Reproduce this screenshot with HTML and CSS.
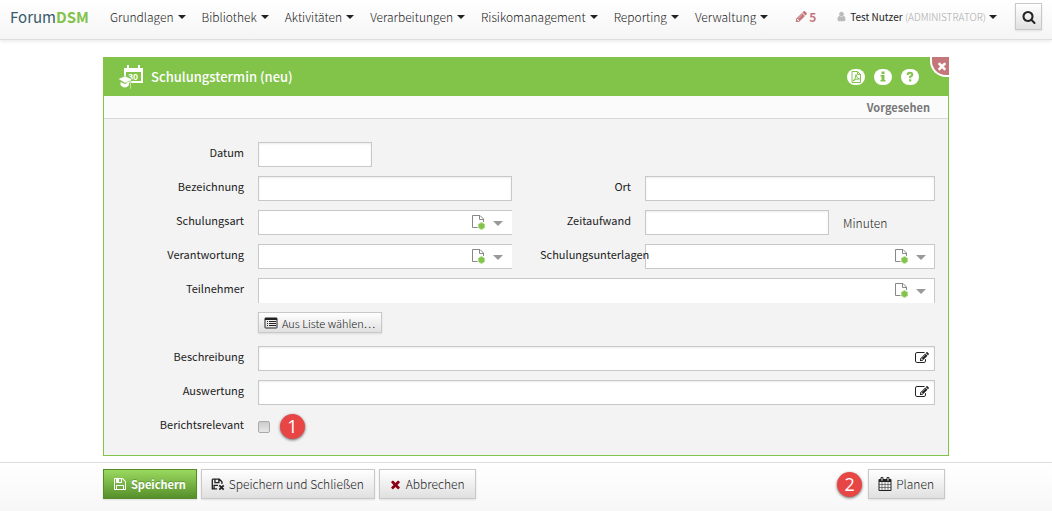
FILE: index.html
```html
<!DOCTYPE html>
<html lang="de">
<head>
	<meta charset="UTF-8">
	<meta name="viewport" content="width=device-width, initial-scale=1.0">
	<title>ForumDSM</title>
	<link rel="stylesheet" href="styles.css">
</head>
<body>
	<!-- shared icons -->
	<svg class="sprite" aria-hidden="true">
		<symbol id="i-times" viewBox="0 0 1792 1792"><path d="M1490 1322q0 40-28 68l-136 136q-28 28-68 28t-68-28l-294-294-294 294q-28 28-68 28t-68-28l-136-136q-28-28-28-68t28-68l294-294-294-294q-28-28-28-68t28-68l136-136q28-28 68-28t68 28l294 294 294-294q28-28 68-28t68 28l136 136q28 28 28 68t-28 68l-294 294 294 294q28 28 28 68z"/></symbol>
		<symbol id="i-save" viewBox="0 0 1792 1792"><path d="M512 1536h768v-384h-768v384zm896 0h128v-896q0-14-10-38.5t-20-34.5l-281-281q-10-10-34-20t-39-10v416q0 40-28 68t-68 28h-576q-40 0-68-28t-28-68v-416h-128v1280h128v-416q0-40 28-68t68-28h832q40 0 68 28t28 68v416zm-384-928v-320q0-13-9.5-22.5t-22.5-9.5h-192q-13 0-22.5 9.5t-9.5 22.5v320q0 13 9.5 22.5t22.5 9.5h192q13 0 22.5-9.5t9.5-22.5zm640 32v928q0 40-28 68t-68 28h-1344q-40 0-68-28t-28-68v-1344q0-40 28-68t68-28h928q40 0 88 20t76 48l280 280q28 28 48 76t20 88z"/></symbol>
		<symbol id="i-edit" viewBox="0 0 1792 1792"><path d="M888 1184l116-116-152-152-116 116v56h96v96h56zm440-720q-16-16-33 1l-350 350q-17 17-1 33t33-1l350-350q17-17 1-33zm80 594v190q0 119-84.5 203.5t-203.5 84.5h-832q-119 0-203.5-84.5t-84.5-203.5v-832q0-119 84.5-203.5t203.5-84.5h832q63 0 117 25 15 7 18 23 3 17-9 29l-49 49q-14 14-32 8-23-6-45-6h-832q-66 0-113 47t-47 113v832q0 66 47 113t113 47h832q66 0 113-47t47-113v-126q0-13 9-22l64-64q15-15 35-7t20 29zm-96-738l288 288-672 672h-288v-288zm444 132l-92 92-288-288 92-92q28-28 68-28t68 28l152 152q28 28 28 68t-28 68z"/></symbol>
		<symbol id="i-new" viewBox="0 0 16 16">
			<path d="M7.500 13.500H2.500V1.500H10L13.500 5V8" fill="none" stroke="#888"/>
			<path d="M9.500 1.500V5.500H13.500" fill="none" stroke="#888"/>
			<path d="M11.500 8.500V15.500M8.500 10.200L14.500 13.800M14.500 10.200L8.500 13.800" stroke="#82c34a" stroke-width="2.400"/>
		</symbol>
	</svg>

	<header class="topbar">
		<a class="logo" href="#">Forum<b>DSM</b></a>
		<nav>
			<ul class="menu">
				<li><a class="caret" href="#">Grundlagen</a></li>
				<li><a class="caret" href="#">Bibliothek</a></li>
				<li><a class="caret" href="#">Aktivitäten</a></li>
				<li><a class="caret" href="#">Verarbeitungen</a></li>
				<li><a class="caret" href="#">Risikomanagement</a></li>
				<li><a class="caret" href="#">Reporting</a></li>
				<li><a class="caret" href="#">Verwaltung</a></li>
			</ul>
		</nav>
		<div class="account">
			<a class="drafts" href="#">
				<svg class="icon" viewBox="0 0 1792 1792"><path d="M491 1536l91-91-235-235-91 91v107h128v128h107zm523-928q0-22-22-22-10 0-17 7l-542 542q-7 7-7 17 0 22 22 22 10 0 17-7l542-542q7-7 7-17zm-54-192l416 416-832 832h-416v-416zm683 96q0 53-37 90l-166 166-416-416 166-165q36-38 90-38 53 0 91 38l235 234q37 39 37 91z"/></svg>5
			</a>
			<a class="user caret" href="#">
				<svg class="icon" viewBox="0 0 1792 1792"><path d="M1536 1399q0 109-62.500 187t-150.500 78h-854q-88 0-150.500-78t-62.500-187q0-85 8.500-160.500t31.500-152 58.500-131 94-89 134.500-34.500q131 128 313 128t313-128q76 0 134.500 34.500t94 89 58.500 131 31.500 152 8.500 160.500zm-256-887q0 159-112.500 271.500t-271.500 112.500-271.500-112.500-112.500-271.500 112.500-271.500 271.500-112.500 271.500 112.500 112.500 271.500z"/></svg>
				<span>Test Nutzer <span class="role">(ADMINISTRATOR)</span></span>
			</a>
			<button class="btn search" type="button" aria-label="Suche">
				<svg class="icon" viewBox="0 0 1792 1792"><path d="M1216 832q0-185-131.500-316.500t-316.500-131.500-316.500 131.500-131.500 316.500 131.500 316.500 316.500 131.500 316.500-131.500 131.500-316.500zm512 832q0 52-38 90t-90 38q-54 0-90-38l-343-342q-179 124-399 124-143 0-273.500-55.500t-225-150-150-225-55.500-273.500 55.500-273.500 150-225 225-150 273.500-55.500 273.500 55.500 225 150 150 225 55.500 273.500q0 220-124 399l343 343q37 37 37 90z"/></svg>
			</button>
		</div>
	</header>

	<main>
		<section class="panel">
			<div class="panel-head">
				<svg class="panel-icon" viewBox="0 0 26 26">
					<path d="M6 4H9V1H11V4H20V1H22V4H25V19H6Z" fill="#fff"/>
					<path d="M8 8H23V17H8Z" fill="#82c34a"/>
					<text x="10" y="16" class="day">30</text>
					<path d="M0 15L7 12L14 15L13 16V25H12V17L7 19Z" fill="#fff" stroke="#82c34a" stroke-width=".6"/>
					<path d="M2.500 18L7 20L11 18V21Q7 26 2.500 21Z" fill="#fff"/>
				</svg>
				<h1>Schulungstermin (neu)</h1>
				<div class="tools">
					<button type="button" aria-label="PDF">
						<svg viewBox="0 0 18 16"><rect width="18" height="16" rx="8" fill="#fff"/><path d="M5 2.500H10.500L13.500 5.500V13.500H5ZM10.500 2.500V5.500H13.500M6 12Q9 9.500 9 5.500Q9.500 9.500 12.500 10Q9 9.500 6 12" fill="none" stroke="#82c34a"/></svg>
					</button>
					<button type="button" aria-label="Info">
						<svg viewBox="0 0 18 16"><rect width="18" height="16" rx="8" fill="#fff"/><path d="M7.500 2.500H10.500V5H7.500ZM6.500 6H10.500V11H11.500V12.500H6.500V11H7.500V7.500H6.500Z" fill="#82c34a"/></svg>
					</button>
					<button type="button" aria-label="Hilfe">
						<svg viewBox="0 0 18 16"><rect width="18" height="16" rx="8" fill="#fff"/><path d="M6.700 6Q6.700 3.800 9 3.800T11.300 5.700Q11.300 6.900 9.200 7.700V9.200" fill="none" stroke="#82c34a" stroke-width="2"/><path d="M8.100 10.300H10.300V12.500H8.100Z" fill="#82c34a"/></svg>
					</button>
				</div>
				<button class="close" type="button" aria-label="Schließen"><svg class="icon"><use href="#i-times"/></svg></button>
			</div>
			<div class="status">Vorgesehen</div>

			<form class="form" id="termin">
				<label for="datum">Datum</label>
				<input class="date" id="datum" type="text">

				<label for="bezeichnung">Bezeichnung</label>
				<input id="bezeichnung" type="text">
				<label for="ort">Ort</label>
				<input id="ort" type="text">

				<label for="art">Schulungsart</label>
				<div class="combo open-right">
					<select id="art"><option></option></select>
					<button type="button" aria-label="Neu"><svg><use href="#i-new"/></svg></button>
				</div>
				<label for="aufwand">Zeitaufwand</label>
				<div class="unit">
					<input id="aufwand" type="text">
					<span>Minuten</span>
				</div>

				<label for="verantwortung">Verantwortung</label>
				<div class="combo open-right">
					<select id="verantwortung"><option></option></select>
					<button type="button" aria-label="Neu"><svg><use href="#i-new"/></svg></button>
				</div>
				<label class="inset" for="unterlagen">Schulungsunterlagen</label>
				<div class="combo">
					<select id="unterlagen"><option></option></select>
					<button type="button" aria-label="Neu"><svg><use href="#i-new"/></svg></button>
				</div>

				<label for="teilnehmer">Teilnehmer</label>
				<div class="combo wide open-bottom">
					<select id="teilnehmer"><option></option></select>
					<button type="button" aria-label="Neu"><svg><use href="#i-new"/></svg></button>
				</div>

				<div class="wide">
					<button class="btn small" type="button">
						<svg class="icon" viewBox="0 0 14 14"><path d="M1.500 2H12.500Q13 2 13 2.500V11.500Q13 12 12.500 12H1.500Q1 12 1 11.500V2.500Q1 2 1.500 2Z" fill="none" stroke="currentColor"/><path d="M1 2H13V4H1ZM3 5H4V6H3ZM5 5H12V6H5ZM3 7H4V8H3ZM5 7H12V8H5ZM3 9H4V10H3ZM5 9H12V10H5Z"/></svg>
						Aus Liste wählen…
					</button>
				</div>

				<label for="beschreibung">Beschreibung</label>
				<div class="text wide">
					<input id="beschreibung" type="text">
					<button type="button" aria-label="Bearbeiten"><svg class="icon"><use href="#i-edit"/></svg></button>
				</div>

				<label for="auswertung">Auswertung</label>
				<div class="text wide">
					<input id="auswertung" type="text">
					<button type="button" aria-label="Bearbeiten"><svg class="icon"><use href="#i-edit"/></svg></button>
				</div>

				<label for="relevant">Berichtsrelevant</label>
				<div class="check wide">
					<input id="relevant" type="checkbox">
					<span class="step">1</span>
				</div>
			</form>
		</section>
	</main>

	<footer class="actions">
		<div class="actions-inner">
			<button class="btn primary" type="submit" form="termin"><svg class="icon"><use href="#i-save"/></svg>Speichern</button>
			<button class="btn" type="button">
				<svg class="icon" viewBox="0 0 16 16"><path d="M1.500 2.500H9.500L12.500 5.500V8M7 13.500H1.500V2.500M3.500 13V9.500H8M4.500 3V6.500H9V3" fill="none" stroke="currentColor" stroke-width="1.500"/><path d="M9.500 9.500L14.500 14.500M14.500 9.500L9.500 14.500" stroke="currentColor" stroke-width="2"/></svg>
				Speichern und Schließen
			</button>
			<button class="btn cancel" type="button"><svg class="icon"><use href="#i-times"/></svg>Abbrechen</button>
			<span class="step">2</span>
			<button class="btn" type="button">
				<svg class="icon" viewBox="0 0 1792 1792"><path d="M192 1664h288v-288h-288v288zm352 0h320v-288h-320v288zm-352-352h288v-320h-288v320zm352 0h320v-320h-320v320zm-352-384h288v-288h-288v288zm736 736h320v-288h-320v288zm-384-736h320v-288h-320v288zm768 736h288v-288h-288v288zm-384-352h320v-320h-320v320zm-352-864v-288q0-13-9.500-22.500t-22.500-9.500h-64q-13 0-22.500 9.500t-9.500 22.500v288q0 13 9.500 22.500t22.500 9.500h64q13 0 22.500-9.500t9.500-22.500zm736 864h288v-320h-288v320zm-384-384h320v-288h-320v288zm384 0h288v-288h-288v288zm32-480v-288q0-13-9.500-22.500t-22.500-9.500h-64q-13 0-22.500 9.500t-9.500 22.500v288q0 13 9.500 22.500t22.500 9.500h64q13 0 22.500-9.500t9.500-22.500zm384-64v1280q0 52-38 90t-90 38h-1408q-52 0-90-38t-38-90v-1280q0-52 38-90t90-38h128v-96q0-66 47-113t113-47h64q66 0 113 47t47 113v96h384v-96q0-66 47-113t113-47h64q66 0 113 47t47 113v96h128q52 0 90 38t38 90z"/></svg>
				Planen
			</button>
		</div>
	</footer>
</body>
</html>
```

FILE: styles.css
```css
:root {
	--green: #82c34a;
	--red: #c5767a;
	--border: #c8c8c8;
	--text: #222;
}

* { box-sizing: border-box; margin: 0; padding: 0; }

body {
	display: flex;
	flex-direction: column;
	min-height: 100vh;
	background: #fff;
	color: var(--text);
	font: 300 12px/16px "Noto Sans CJK SC", "Open Sans", sans-serif;
}

button, input, select { font: inherit; color: inherit; }
button { cursor: pointer; }
a { color: inherit; text-decoration: none; }

.sprite { position: absolute; width: 0; height: 0; }
.icon { width: 14px; height: 14px; fill: currentColor; flex: none; }

.caret { display: flex; align-items: center; gap: 4px; white-space: nowrap; }
.caret::after {
	content: "";
	border: 4px solid transparent;
	border-top-color: currentColor;
	border-bottom: 0;
}

/* top bar */
.topbar {
	display: flex;
	align-items: center;
	height: 40px;
	padding: 0 10px 6px;
	border-bottom: 1px solid #ddd;
	background: linear-gradient(#fff, #f5f5f5);
	box-shadow: 0 1px 4px rgba(0, 0, 0, 0.1);
}
.logo { width: 100px; font-size: 15px; font-weight: 400; color: #37596a; }
.logo b { color: var(--green); }
.menu { display: flex; gap: 16px; list-style: none; }
.account { display: flex; align-items: center; margin-left: auto; }
.drafts { display: flex; align-items: center; gap: 1px; margin-right: 20px; color: var(--red); font-weight: bold; }
.drafts .icon, .cancel .icon { width: 13px; height: 13px; }
.user { gap: 3px; margin-right: 18px; font-size: 10px; font-weight: 400; }
.user .icon { width: 11px; height: 11px; color: #bbb; }
.role { color: #aaa; font-weight: 300; }

/* buttons */
.btn {
	display: inline-flex;
	align-items: center;
	gap: 4px;
	height: 30px;
	padding: 0 10px 0 9px;
	border: 1px solid var(--border);
	background: linear-gradient(#fff, #e0e0e0);
	box-shadow: 0 1px 2px rgba(0, 0, 0, 0.1);
	color: #222;
	white-space: nowrap;
}
.btn.primary {
	border-color: #568a2a;
	background: linear-gradient(#9ad95f, #568f2b);
	color: #fff;
	font-size: 11px;
	font-weight: bold;
	text-shadow: 0 -1px 0 rgba(0, 0, 0, 0.2);
}
.btn.small { height: 21px; padding: 0 6px 0 5px; font-size: 11px; }
.btn.search { width: 27px; height: 27px; padding: 0; justify-content: center; }
.cancel .icon { color: #8b0014; }

/* panel */
main { flex: 1; padding: 17px 10px 6px; }
.panel {
	max-width: 846px;
	margin: 0 auto;
	border: 1px solid var(--green);
	border-top: 0;
	background: #f3f3f3;
}
.panel-head {
	position: relative;
	display: flex;
	align-items: center;
	height: 39px;
	margin: 0 -1px;
	padding: 0 30px 0 15px;
	background: var(--green);
	color: #fff;
}
.panel-icon { width: 26px; height: 26px; margin-right: 7px; }
.day { fill: #fff; font: bold 9px "Liberation Sans", sans-serif; }
.panel-head h1 { font-size: 13px; font-weight: 500; }
.tools { display: flex; gap: 9px; margin-left: auto; }
.tools button { width: 18px; height: 16px; border: 0; background: none; }
.tools svg { display: block; width: 18px; height: 16px; }
.close {
	position: absolute;
	top: 0;
	right: 0;
	width: 19px;
	height: 20px;
	border: solid #fff;
	border-width: 0 0 2px 2px;
	border-radius: 0 0 0 16px;
	background: var(--red);
	color: #fff;
}
.close .icon { display: block; width: 12px; height: 12px; margin-left: 4px; }
.status {
	padding: 3px 18px;
	border-bottom: 1px solid #d8d8d8;
	background: #fbfbfb;
	color: #777;
	font-size: 11px;
	font-weight: bold;
	text-align: right;
}

/* form */
.form {
	display: grid;
	grid-template-columns: 140px minmax(0, 254fr) 105px minmax(0, 290fr);
	grid-auto-rows: 25px;
	gap: 9px 14px;
	padding: 23px 13px 16px 0;
}
.form label {
	z-index: 1;
	padding-top: 2px;
	font-size: 11px;
	font-weight: 400;
	text-align: right;
	white-space: nowrap;
}
.form .inset { padding-left: 14px; }
.form input[type="text"] {
	width: 100%;
	height: 25px;
	padding: 0 6px;
	border: 1px solid var(--border);
	background: #fff;
	box-shadow: inset 0 1px 2px rgba(0, 0, 0, 0.08);
}
.form .date { max-width: 114px; }
.form .date + label { grid-column: 1; }
.wide { grid-column: 2 / -1; }
.unit { display: flex; align-items: center; }
.form .unit input { flex: 0 1 184px; min-width: 0; }
.unit span { margin-left: 14px; }

.combo, .text { position: relative; }
.combo select {
	width: 100%;
	height: 25px;
	padding: 0 50px 0 6px;
	border: 1px solid var(--border);
	border-radius: 0;
	background: #fff;
	appearance: none;
}
.combo::after {
	content: "";
	position: absolute;
	top: 11px;
	right: 9px;
	border: 5px solid transparent;
	border-top-color: #999;
	border-bottom: 0;
	pointer-events: none;
}
.combo button, .text button { position: absolute; border: 0; background: none; }
.combo button { top: 4px; right: 26px; width: 16px; height: 16px; }
.combo button svg { display: block; width: 16px; height: 16px; }
.open-right select { border-right: 0; }
.open-bottom select { border-bottom: 0; }
.text button { top: 5px; right: 6px; width: 14px; height: 14px; }
.text .icon { display: block; }

.check { display: flex; align-items: center; gap: 10px; }
.check input {
	width: 12px;
	height: 12px;
	border: 1px solid #aaa;
	border-radius: 2px;
	background: linear-gradient(#ccc, #e6e6e6);
	appearance: none;
}
.step {
	width: 25px;
	height: 25px;
	border-radius: 50%;
	background: #e84545;
	box-shadow: 0 1px 3px rgba(0, 0, 0, 0.6);
	color: #fff;
	font: 18px/25px "Open Sans", sans-serif;
	text-align: center;
}

/* bottom actions */
.actions {
	padding: 6px 10px 12px;
	border-top: 1px solid #ddd;
	background: linear-gradient(#fff, #f7f7f7);
}
.actions-inner {
	display: flex;
	align-items: center;
	gap: 4px;
	max-width: 846px;
	margin: 0 auto;
	padding-right: 4px;
}
.actions .step { margin-left: auto; margin-right: 2px; }
```
